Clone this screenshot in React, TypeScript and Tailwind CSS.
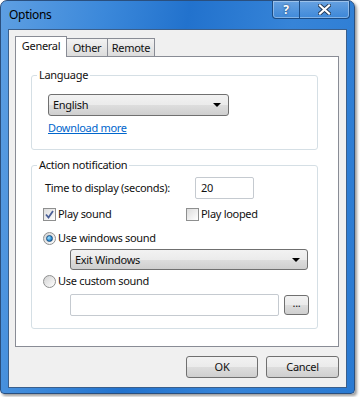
const FONT = { fontFamily: '"Noto Sans", "Open Sans", Arial, sans-serif' };

function Combo({ text, className = '' }: { text: string; className?: string }) {
    return (
        <div
            className={`flex items-center justify-between rounded-[3px] border border-[#707070] bg-[linear-gradient(#f2f2f2_0%,#ebebeb_50%,#dddddd_51%,#cfcfcf_100%)] pl-[4px] pr-[7px] ${className}`}
        >
            <span>{text}</span>
            <svg width="8" height="4" viewBox="0 0 8 4">
                <path d="M0 0 L8 0 L4 4 Z" fill="#000" />
            </svg>
        </div>
    );
}

function Checkbox({ checked }: { checked?: boolean }) {
    return (
        <div className="flex h-[13px] w-[13px] items-center justify-center border border-[#8e8f8f] bg-[linear-gradient(135deg,#dcdcdc,#ffffff)]">
            {checked && (
                <svg width="9" height="9" viewBox="0 0 9 9">
                    <path d="M1 4.5 L3.5 7.5 L8 1" stroke="#4a5f97" strokeWidth="1.8" fill="none" />
                </svg>
            )}
        </div>
    );
}

function Radio({ checked }: { checked?: boolean }) {
    return (
        <div className="flex h-[13px] w-[13px] items-center justify-center rounded-full border border-[#8e8f8f] bg-[linear-gradient(135deg,#d2d2d2,#ffffff)]">
            {checked && (
                <div className="h-[7px] w-[7px] rounded-full border border-[#1b4f80] bg-[radial-gradient(circle_at_35%_35%,#a6e3ff,#2a8dd4_60%,#0d4d8c)]" />
            )}
        </div>
    );
}

function Button({ children, className = '' }: { children: React.ReactNode; className?: string }) {
    return (
        <div
            className={`flex items-center justify-center rounded-[3px] border border-[#707070] bg-[linear-gradient(#f2f2f2_0%,#ebebeb_50%,#dddddd_51%,#cfcfcf_100%)] ${className}`}
        >
            {children}
        </div>
    );
}

export default function App() {
    return (
        <div className="h-[397px] w-[360px] overflow-hidden bg-white text-[11px] leading-[16px] tracking-[-0.3px] text-[#111]" style={FONT}>
            <div className="flex h-[394px] w-[355px] flex-col rounded-t-[7px] rounded-b-[4px] border border-[#2a4f7e] bg-[linear-gradient(100deg,#5e9fe2_0%,#3b88da_25%,#2272cd_45%,#3684d8_70%,#2a7ad2_100%)] shadow-[2px_2px_3px_rgba(0,0,0,0.4)]">
                {/* Title bar */}
                <div className="flex h-[28px] items-start justify-between">
                    <span className="pl-[8px] pt-[6px] text-[12px] text-black">Options</span>
                    <div className="mr-[4px] flex h-[18px] overflow-hidden rounded-b-[4px] border border-t-0 border-[#1c4c84] shadow-[inset_0_0_0_1px_rgba(255,255,255,0.35)]">
                        <div className="flex w-[27px] items-center justify-center border-r border-[#1c4c84] bg-[linear-gradient(rgba(255,255,255,0.25),rgba(255,255,255,0.05))] text-[12px] font-bold text-white [text-shadow:0_0_2px_#1a2f4f]">
                            ?
                        </div>
                        <div className="flex w-[49px] items-center justify-center bg-[linear-gradient(rgba(255,255,255,0.25),rgba(255,255,255,0.05))]">
                            <svg width="13" height="11" viewBox="0 0 13 11">
                                <path d="M2 1.5 L11 9.5 M11 1.5 L2 9.5" stroke="#263b58" strokeWidth="4" strokeLinecap="square" />
                                <path d="M2 1.5 L11 9.5 M11 1.5 L2 9.5" stroke="#fff" strokeWidth="2.2" strokeLinecap="square" />
                            </svg>
                        </div>
                    </div>
                </div>

                {/* Client area */}
                <div className="mx-[7px] mb-[5px] flex flex-1 flex-col border border-[#3a5f8c] bg-[#f0f0f0]">
                    <div className="pl-[6px] pt-[6px]">
                        {/* Tabs */}
                        <div className="flex h-[20px] items-end">
                            <div className="relative z-10 -mb-px flex h-[21px] w-[52px] items-center justify-center border border-b-0 border-[#898c95] bg-white pb-[2px]">
                                General
                            </div>
                            <div className="flex h-[18px] w-[41px] items-center justify-center border-t border-r border-[#898c95] bg-[linear-gradient(#f2f2f2,#dcdcdc)]">
                                Other
                            </div>
                            <div className="flex h-[18px] w-[47px] items-center justify-center border-t border-r border-[#898c95] bg-[linear-gradient(#f2f2f2,#dcdcdc)]">
                                Remote
                            </div>
                        </div>

                        {/* Panel */}
                        <div className="h-[291px] w-[324px] border border-[#898c95] bg-white">
                            <fieldset className="ml-[15px] mt-[10px] w-[287px] rounded-[3px] border border-[#d5dfe5] pb-[13px]">
                                <legend className="ml-[5px] px-[2px]">Language</legend>
                                <div className="pl-[16px]">
                                    <Combo text="English" className="mt-[11px] h-[22px] w-[181px]" />
                                    <div className="mt-[4px] text-[#0066cc] underline">Download more</div>
                                </div>
                            </fieldset>

                            <fieldset className="ml-[15px] mt-[7px] w-[287px] rounded-[3px] border border-[#d5dfe5] pb-[12px]">
                                <legend className="ml-[5px] px-[2px]">Action notification</legend>
                                <div className="pl-[11px]">
                                    <div className="mt-[4px] flex items-center">
                                        <span className="ml-[2px] w-[150px]">Time to display (seconds):</span>
                                        <div className="flex h-[22px] w-[59px] items-center rounded-[2px] border border-[#c5cad0] pl-[5px]">20</div>
                                    </div>
                                    <div className="mt-[7px] flex h-[16px] items-center">
                                        <div className="flex w-[143px] items-center gap-[2px]">
                                            <Checkbox checked />
                                            <span>Play sound</span>
                                        </div>
                                        <div className="flex items-center gap-[2px]">
                                            <Checkbox />
                                            <span>Play looped</span>
                                        </div>
                                    </div>
                                    <div className="mt-[8px] flex h-[16px] items-center gap-[2px]">
                                        <Radio checked />
                                        <span>Use windows sound</span>
                                    </div>
                                    <Combo text="Exit Windows" className="ml-[27px] mt-[3px] h-[21px] w-[238px]" />
                                    <div className="mt-[3px] flex h-[16px] items-center gap-[2px]">
                                        <Radio />
                                        <span>Use custom sound</span>
                                    </div>
                                    <div className="ml-[27px] mt-[5px] flex items-center gap-[5px]">
                                        <div className="h-[22px] w-[209px] rounded-[2px] border border-[#c5cad0]" />
                                        <Button className="h-[20px] w-[25px] pb-[4px]">...</Button>
                                    </div>
                                </div>
                            </fieldset>
                        </div>
                    </div>

                    {/* Buttons */}
                    <div className="mt-[9px] flex justify-end gap-[8px] pr-[7px]">
                        <Button className="h-[22px] w-[72px]">OK</Button>
                        <Button className="h-[22px] w-[73px]">Cancel</Button>
                    </div>
                </div>
            </div>
        </div>
    );
}
